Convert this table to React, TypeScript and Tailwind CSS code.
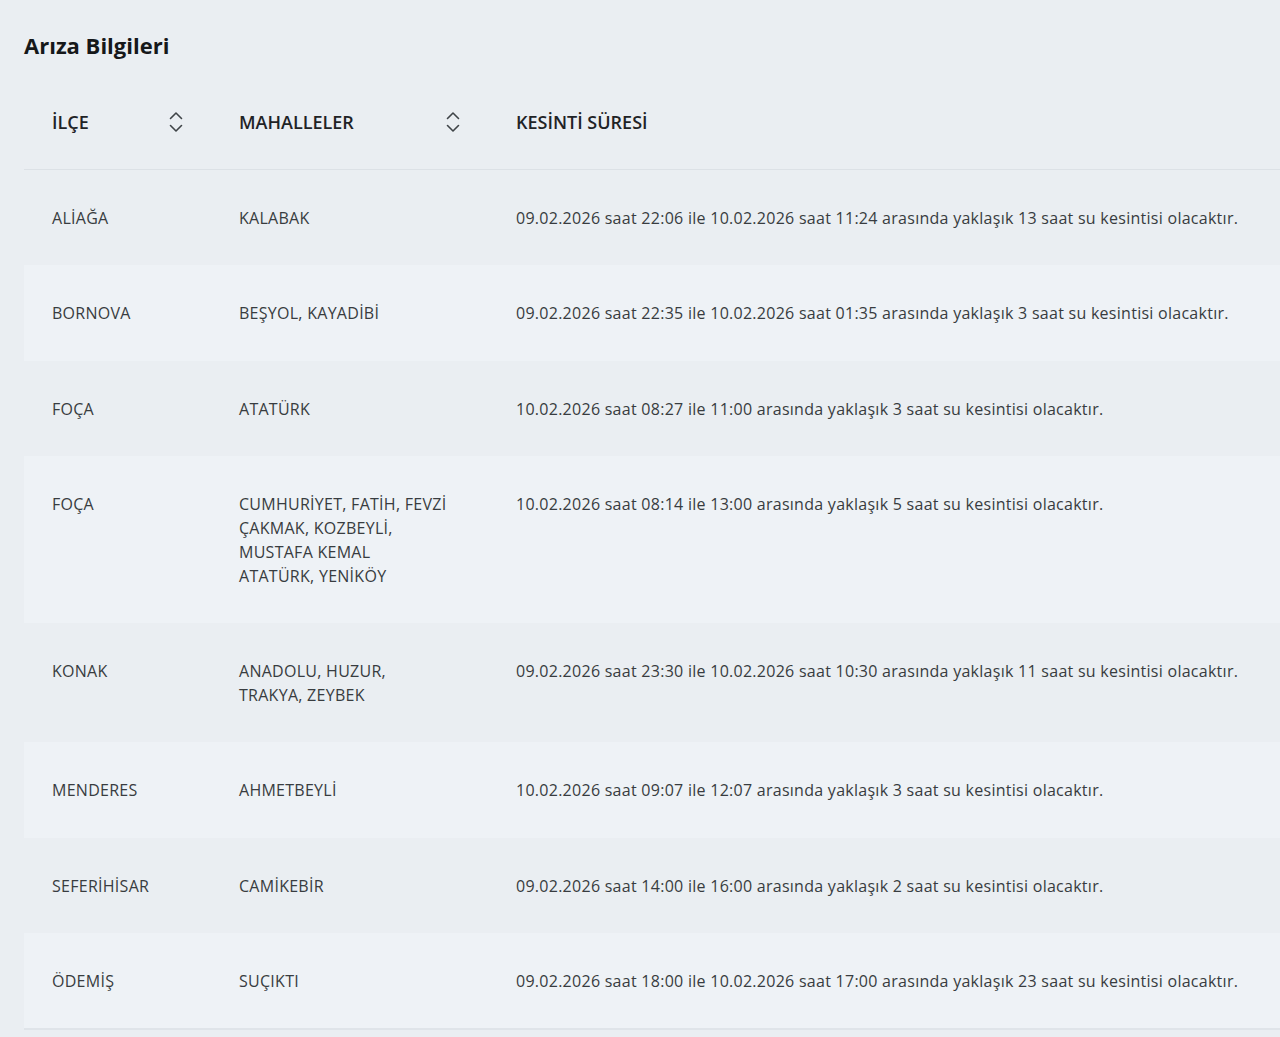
import React from "react";

type Row = { ilce: string; mahalle: string[]; sure: string };

const rows: Row[] = [
  {
    ilce: "ALİAĞA",
    mahalle: ["KALABAK"],
    sure: "09.02.2026 saat 22:06 ile 10.02.2026 saat 11:24 arasında yaklaşık 13 saat su kesintisi olacaktır.",
  },
  {
    ilce: "BORNOVA",
    mahalle: ["BEŞYOL, KAYADİBİ"],
    sure: "09.02.2026 saat 22:35 ile 10.02.2026 saat 01:35 arasında yaklaşık 3 saat su kesintisi olacaktır.",
  },
  {
    ilce: "FOÇA",
    mahalle: ["ATATÜRK"],
    sure: "10.02.2026 saat 08:27 ile 11:00 arasında yaklaşık 3 saat su kesintisi olacaktır.",
  },
  {
    ilce: "FOÇA",
    mahalle: ["CUMHURİYET, FATİH, FEVZİ", "ÇAKMAK, KOZBEYLİ,", "MUSTAFA KEMAL", "ATATÜRK, YENİKÖY"],
    sure: "10.02.2026 saat 08:14 ile 13:00 arasında yaklaşık 5 saat su kesintisi olacaktır.",
  },
  {
    ilce: "KONAK",
    mahalle: ["ANADOLU, HUZUR,", "TRAKYA, ZEYBEK"],
    sure: "09.02.2026 saat 23:30 ile 10.02.2026 saat 10:30 arasında yaklaşık 11 saat su kesintisi olacaktır.",
  },
  {
    ilce: "MENDERES",
    mahalle: ["AHMETBEYLİ"],
    sure: "10.02.2026 saat 09:07 ile 12:07 arasında yaklaşık 3 saat su kesintisi olacaktır.",
  },
  {
    ilce: "SEFERİHİSAR",
    mahalle: ["CAMİKEBİR"],
    sure: "09.02.2026 saat 14:00 ile 16:00 arasında yaklaşık 2 saat su kesintisi olacaktır.",
  },
  {
    ilce: "ÖDEMİŞ",
    mahalle: ["SUÇIKTI"],
    sure: "09.02.2026 saat 18:00 ile 10.02.2026 saat 17:00 arasında yaklaşık 23 saat su kesintisi olacaktır.",
  },
];

// sıralama ikonu (yukarı/aşağı ok)
function SortIcon() {
  return (
    <svg width="14" height="22" viewBox="0 0 14 22" fill="none" stroke="#3f4448" strokeWidth="1.6" strokeLinecap="round" strokeLinejoin="round">
      <path d="M1.5 7.5 L7 2 L12.5 7.5" />
      <path d="M1.5 14.5 L7 20 L12.5 14.5" />
    </svg>
  );
}

export default function App() {
  return (
    <div className="min-h-[1037px] w-full overflow-hidden bg-[#eaeef2] pl-6 pt-[31px] font-['Open_Sans','Noto_Sans',sans-serif]">
      <h2 className="text-[22px] leading-7 font-bold text-[#16181a]">Arıza Bilgileri</h2>

      <div className="mt-[15px] w-[1256px]">
        {/* başlık satırı */}
        <div className="flex border-b border-[#dce1e6] text-[18px] leading-6 font-semibold text-[#1f2326]">
          <div className="flex w-[187px] items-center justify-between px-7 pt-9 pb-[35px]">
            <span>İLÇE</span>
            <SortIcon />
          </div>
          <div className="flex w-[277px] items-center justify-between px-7 pt-9 pb-[35px]">
            <span>MAHALLELER</span>
            <SortIcon />
          </div>
          <div className="flex-1 px-7 pt-9 pb-[35px]">
            <span>KESİNTİ SÜRESİ</span>
          </div>
        </div>

        {rows.map((r, i) => (
          <div
            key={i}
            className={`flex text-[16px] leading-6 tracking-[0.27px] text-[#383c40] ${i % 2 === 1 ? "bg-[#eef2f6]" : ""}`}
          >
            <div className="w-[187px] px-7 pt-9 pb-[35.25px]">{r.ilce}</div>
            <div className="w-[277px] px-7 pt-9 pb-[35.25px]">
              {r.mahalle.map((m, j) => (
                <div key={j}>{m}</div>
              ))}
            </div>
            <div className="flex-1 whitespace-nowrap px-7 pt-9 pb-[35.25px]">{r.sure}</div>
          </div>
        ))}
        <div className="border-b-2 border-[#dfe4e9]" />
      </div>
    </div>
  );
}
